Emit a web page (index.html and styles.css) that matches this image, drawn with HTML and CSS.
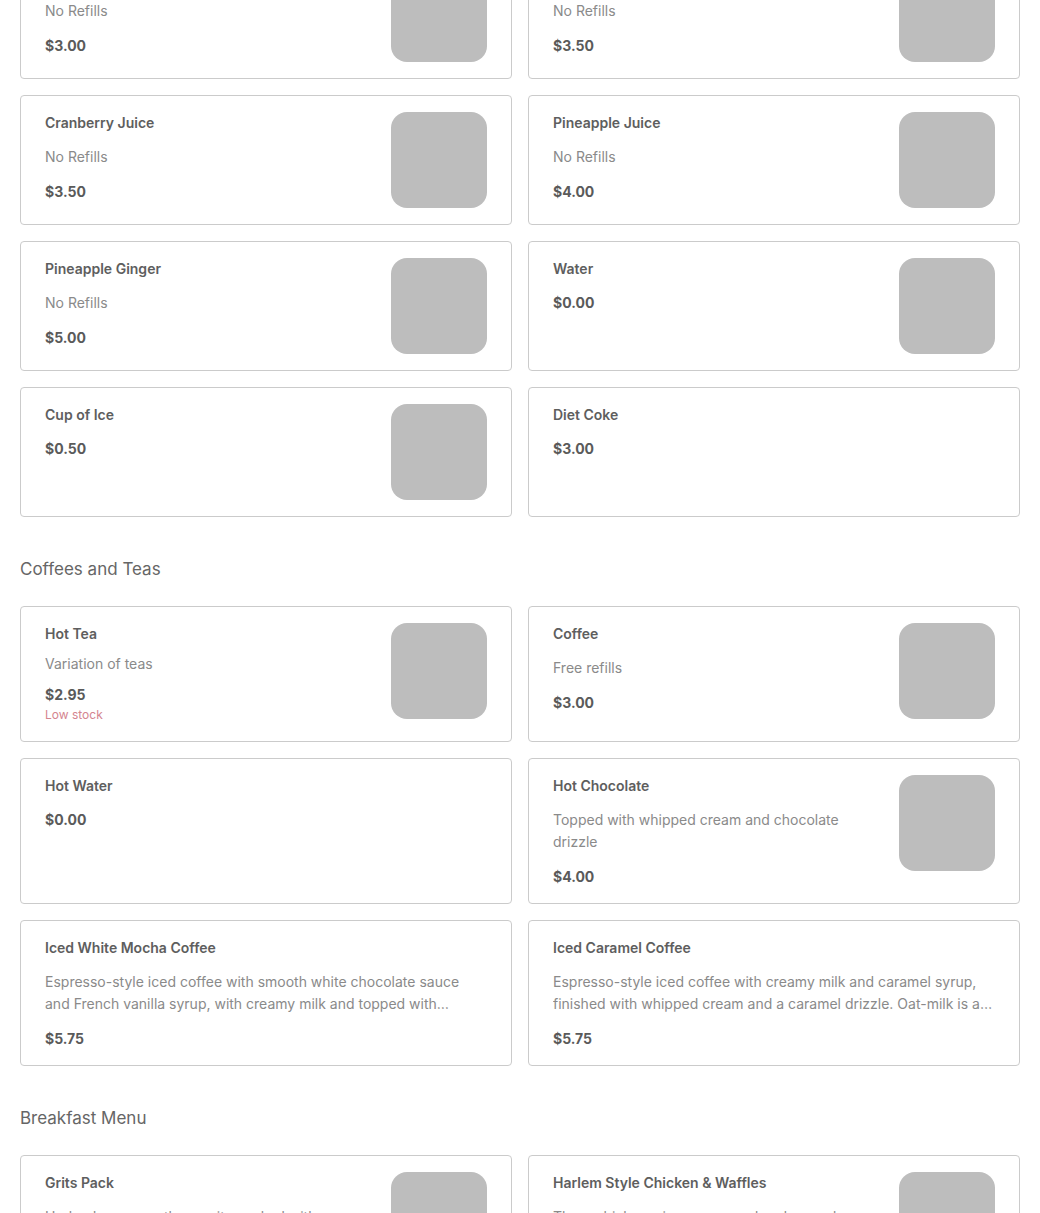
FILE: index.html
```html
<!DOCTYPE html>
<html lang="en">

<head>
    <meta charset="UTF-8">
    <meta name="viewport" content="width=device-width, initial-scale=1.0">
    <title>Menu</title>
    <link rel="stylesheet" href="styles.css">
</head>

<body>

    <div class="menu_main">

        <!-- 음료 (scrolled past heading) -->
        <section class="menu_section first">
            <div class="menu_grid">
                <div class="item">
                    <div class="item_text">
                        <h3 class="item_name">Sweet Tea</h3>
                        <p class="item_desc">No Refills</p>
                        <p class="item_price">$3.00</p>
                    </div>
                    <div class="item_img"></div>
                </div>
                <div class="item">
                    <div class="item_text">
                        <h3 class="item_name">Orange Juice</h3>
                        <p class="item_desc">No Refills</p>
                        <p class="item_price">$3.50</p>
                    </div>
                    <div class="item_img"></div>
                </div>
                <div class="item">
                    <div class="item_text">
                        <h3 class="item_name">Cranberry Juice</h3>
                        <p class="item_desc">No Refills</p>
                        <p class="item_price">$3.50</p>
                    </div>
                    <div class="item_img"></div>
                </div>
                <div class="item">
                    <div class="item_text">
                        <h3 class="item_name">Pineapple Juice</h3>
                        <p class="item_desc">No Refills</p>
                        <p class="item_price">$4.00</p>
                    </div>
                    <div class="item_img"></div>
                </div>
                <div class="item">
                    <div class="item_text">
                        <h3 class="item_name">Pineapple Ginger</h3>
                        <p class="item_desc">No Refills</p>
                        <p class="item_price">$5.00</p>
                    </div>
                    <div class="item_img"></div>
                </div>
                <div class="item">
                    <div class="item_text">
                        <h3 class="item_name">Water</h3>
                        <p class="item_price">$0.00</p>
                    </div>
                    <div class="item_img"></div>
                </div>
                <div class="item">
                    <div class="item_text">
                        <h3 class="item_name">Cup of Ice</h3>
                        <p class="item_price">$0.50</p>
                    </div>
                    <div class="item_img"></div>
                </div>
                <div class="item">
                    <div class="item_text">
                        <h3 class="item_name">Diet Coke</h3>
                        <p class="item_price">$3.00</p>
                    </div>
                </div>
            </div>
        </section>

        <section class="menu_section">
            <h2>Coffees and Teas</h2>
            <div class="menu_grid">
                <div class="item stock">
                    <div class="item_text">
                        <h3 class="item_name">Hot Tea</h3>
                        <p class="item_desc">Variation of teas</p>
                        <p class="item_price">$2.95</p>
                        <p class="item_stock">Low stock</p>
                    </div>
                    <div class="item_img"></div>
                </div>
                <div class="item">
                    <div class="item_text">
                        <h3 class="item_name">Coffee</h3>
                        <p class="item_desc">Free refills</p>
                        <p class="item_price">$3.00</p>
                    </div>
                    <div class="item_img"></div>
                </div>
                <div class="item">
                    <div class="item_text">
                        <h3 class="item_name">Hot Water</h3>
                        <p class="item_price">$0.00</p>
                    </div>
                </div>
                <div class="item">
                    <div class="item_text">
                        <h3 class="item_name">Hot Chocolate</h3>
                        <p class="item_desc">Topped with whipped cream and chocolate drizzle</p>
                        <p class="item_price">$4.00</p>
                    </div>
                    <div class="item_img"></div>
                </div>
                <div class="item">
                    <div class="item_text">
                        <h3 class="item_name">Iced White Mocha Coffee</h3>
                        <p class="item_desc">Espresso-style iced coffee with smooth white chocolate sauce and French vanilla syrup, with creamy milk and topped with whipped cream.</p>
                        <p class="item_price">$5.75</p>
                    </div>
                </div>
                <div class="item">
                    <div class="item_text">
                        <h3 class="item_name">Iced Caramel Coffee</h3>
                        <p class="item_desc">Espresso-style iced coffee with creamy milk and caramel syrup, finished with whipped cream and a caramel drizzle. Oat-milk is a great option.</p>
                        <p class="item_price">$5.75</p>
                    </div>
                </div>
            </div>
        </section>

        <section class="menu_section">
            <h2>Breakfast Menu</h2>
            <div class="menu_grid">
                <div class="item">
                    <div class="item_text">
                        <h3 class="item_name">Grits Pack</h3>
                        <p class="item_desc">Harlem's own southern grits cooked with creamy butter and cheese</p>
                        <p class="item_price">$6.00</p>
                    </div>
                    <div class="item_img"></div>
                </div>
                <div class="item">
                    <div class="item_text">
                        <h3 class="item_name">Harlem Style Chicken &amp; Waffles</h3>
                        <p class="item_desc">Three chicken wings seasoned and served on a golden waffle</p>
                        <p class="item_price">$14.00</p>
                    </div>
                    <div class="item_img"></div>
                </div>
            </div>
        </section>

    </div>

</body>

</html>
```

FILE: styles.css
```css
/* 기본 설정 */
* {
    box-sizing: border-box;
    margin: 0;
    padding: 0;
}

html,
body {
    background-color: #ffffff;
    font-family: Inter, "Noto Sans", Arial, sans-serif;
    color: #5c5c5c;
    overflow: hidden;
}

/* 메인 컨텐츠 (page is scrolled a bit) */
.menu_main {
    padding: 0 20px;
    margin-top: -51px;
}

.menu_section h2 {
    font-size: 17px;
    font-weight: 400;
    line-height: 22px;
    color: #666666;
    margin: 41px 0 26px;
}

.menu_grid {
    display: grid;
    grid-template-columns: 1fr 1fr;
    gap: 16px;
}

/* 카드 */
.item {
    display: flex;
    gap: 24px;
    min-height: 130px;
    padding: 16px 24px;
    border: 1px solid #cbcbcb;
    border-radius: 4px;
    background-color: #ffffff;
}

.item_text {
    flex: 1;
    min-width: 0;
    padding-top: 1px;
}

.item_name {
    font-size: 14px;
    font-weight: 600;
    line-height: 20px;
    color: #5e5e5e;
}

.item_desc {
    margin-top: 13px;
    font-size: 14px;
    line-height: 22px;
    color: #8a8a8a;
    display: -webkit-box;
    -webkit-line-clamp: 2;
    -webkit-box-orient: vertical;
    overflow: hidden;
}

.item_price {
    margin-top: 13px;
    font-size: 14px;
    font-weight: 700;
    line-height: 21px;
    color: #5a5a5a;
}

.item.stock .item_desc,
.item.stock .item_price {
    margin-top: 9px;
}

.item_stock {
    font-size: 12px;
    line-height: 20px;
    color: #d4848f;
}

.item_img {
    flex-shrink: 0;
    width: 96px;
    height: 96px;
    border-radius: 16px;
    background-color: #bdbdbd;
}
```
